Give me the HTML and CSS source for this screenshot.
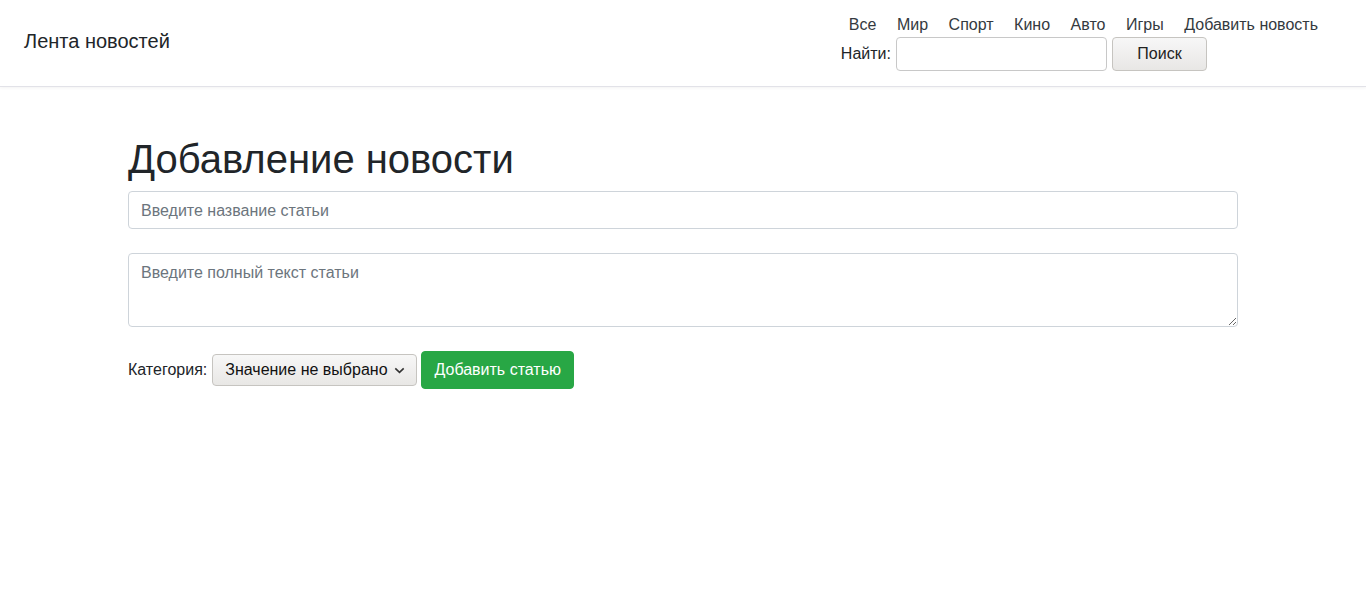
FILE: index.html
```html
<!DOCTYPE html>
<html lang="ru">
<head>
<meta charset="utf-8">
<title>Добавление новости</title>
<link rel="stylesheet" href="styles.css">
</head>
<body>
<header class="header">
  <a class="brand" href="#">Лента новостей</a>
  <div class="header-right">
    <nav class="nav">
      <a href="#">Все</a>
      <a href="#">Мир</a>
      <a href="#">Спорт</a>
      <a href="#">Кино</a>
      <a href="#">Авто</a>
      <a href="#">Игры</a>
      <a href="#">Добавить новость</a>
    </nav>
    <form class="search">
      <label class="search-label">Найти:</label>
      <input class="search-input" type="text">
      <button class="btn-gray search-btn" type="button">Поиск</button>
    </form>
  </div>
</header>
<main class="container">
  <h1 class="title">Добавление новости</h1>
  <form class="form">
    <input class="field" type="text" placeholder="Введите название статьи">
    <textarea class="field area" placeholder="Введите полный текст статьи"></textarea>
    <div class="row">
      <label class="cat-label">Категория:</label>
      <div class="select-wrap">
        <select class="select">
          <option>Значение не выбрано</option>
        </select>
        <svg class="chev" width="11" height="7" viewBox="0 0 11 7"><path d="M1.3 1.3 L5.5 5.3 L9.7 1.3" fill="none" stroke="#333" stroke-width="1.6"/></svg>
      </div>
      <button class="btn-green" type="button">Добавить статью</button>
    </div>
  </form>
</main>
</body>
</html>
```
FILE: styles.css
```css
* { box-sizing: border-box; }
html, body { margin: 0; padding: 0; }
body {
  font-family: "Liberation Sans", Arial, sans-serif;
  font-size: 16px;
  line-height: 1.5;
  color: #212529;
  background: #fff;
}
.header {
  height: 87px;
  display: flex;
  justify-content: space-between;
  align-items: flex-start;
  padding: 0 48px 0 24px;
  border-bottom: 1px solid #e2e2e8;
  box-shadow: 0 1px 3px rgba(0,0,0,0.05);
}
.brand {
  font-size: 20px;
  color: #212529;
  text-decoration: none;
  line-height: 24px;
  margin-top: 29px;
}
.header-right {
  display: flex;
  flex-direction: column;
  align-items: flex-start;
  padding-top: 13px;
}
.nav {
  display: flex;
  gap: 20.5px;
  margin-left: 8px;
  line-height: 24px;
}
.nav a {
  color: #343a40;
  text-decoration: none;
}
.search {
  display: flex;
  align-items: center;
  gap: 5px;
}
.search-label { color: #212529; }
.search-input {
  width: 211px;
  height: 34px;
  border: 1px solid #c8c8c8;
  border-radius: 4px;
  font: inherit;
  padding: 2px 6px;
}
.btn-gray {
  font: inherit;
  color: #222;
  background: linear-gradient(#f7f7f7, #e8e7e5);
  border: 1px solid #c6c4c0;
  border-radius: 4px;
}
.search-btn {
  width: 95px;
  height: 34px;
}
.container {
  width: 1110px;
  margin: 0 auto;
  padding-top: 48px;
}
.title {
  font-size: 40px;
  font-weight: 500;
  line-height: 1.2;
  margin: 0 0 8px;
}
.form {
  display: flex;
  flex-direction: column;
  gap: 24px;
}
.field {
  width: 100%;
  height: 38px;
  padding: 7px 12px 5px;
  font: inherit;
  color: #495057;
  border: 1px solid #ced4da;
  border-radius: 4px;
  display: block;
}
.field::placeholder { color: #6c757d; }
.area {
  height: 74px;
  resize: vertical;
}
.row {
  display: flex;
  align-items: center;
  gap: 4px;
}
.cat-label {
  color: #212529;
  margin-right: 1px;
}
.select-wrap {
  position: relative;
}
.select {
  appearance: none;
  -webkit-appearance: none;
  width: 205px;
  height: 32px;
  font: inherit;
  color: #111;
  padding: 0 20px 0 12px;
  background: linear-gradient(#f7f7f7, #e8e7e5);
  border: 1px solid #c6c4c0;
  border-radius: 4px;
}
.chev {
  position: absolute;
  right: 12px;
  top: 13px;
  pointer-events: none;
}
.btn-green {
  font: inherit;
  color: #fff;
  background: #28a745;
  border: 1px solid #28a745;
  border-radius: 4px;
  height: 38px;
  padding: 0 12px;
  width: 153px;
}
```
